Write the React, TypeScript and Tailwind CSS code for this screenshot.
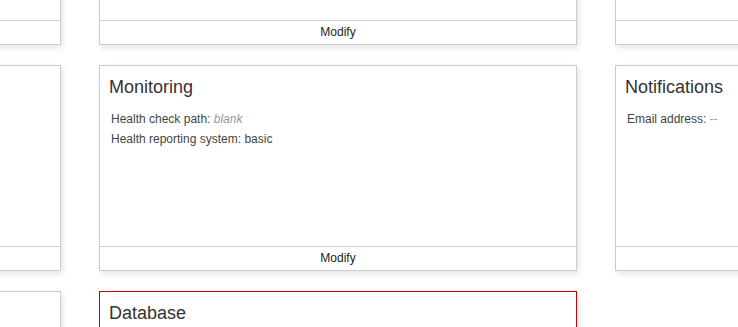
import React from "react";

type Row = { label: string; value: string; muted?: boolean; italic?: boolean };

interface CardProps {
  title?: string;
  rows?: Row[];
  footer?: boolean;
  footerLabel?: boolean;
  danger?: boolean;
}

function Card({ title, rows = [], footer = true, footerLabel = true, danger = false }: CardProps) {
  return (
    <div
      className={`flex h-[206px] flex-col bg-white shadow-[2px_3px_6px_rgba(0,0,0,0.1)] border ${
        danger ? "border-[#c40000]" : "border-[#cccccc]"
      }`}
    >
      <div className="flex-1 px-[9px] pt-[11px]">
        {title && (
          <h3 className="text-[18px] leading-[20px] text-[#333]">{title}</h3>
        )}
        {rows.length > 0 && (
          <div className="mt-[12px] pl-[2px] text-[12px] leading-[20px] text-[#444]">
            {rows.map((r) => (
              <div key={r.label}>
                {r.label}:{" "}
                <span
                  className={`${r.italic ? "italic" : ""} ${
                    r.muted ? "text-[#999]" : ""
                  }`}
                >
                  {r.value}
                </span>
              </div>
            ))}
          </div>
        )}
      </div>
      {footer && (
        <div className="h-[24px] border-t border-[#cccccc] text-center text-[12px] leading-[23px] text-[#222]">
          {footerLabel ? "Modify" : null}
        </div>
      )}
    </div>
  );
}

export default function App() {
  return (
    <div
      className="relative h-[327px] w-[738px] overflow-hidden bg-white"
      style={{ fontFamily: '"Liberation Sans", Arial, Helvetica, sans-serif' }}
    >
      <div className="-ml-[417px] -mt-[161px] grid grid-cols-[478px_478px_478px] gap-x-[38px] gap-y-[20px]">
        {/* top row */}
        <Card footerLabel={false} />
        <Card />
        <Card footerLabel={false} />

        {/* middle row */}
        <Card footerLabel={false} />
        <Card
          title="Monitoring"
          rows={[
            { label: "Health check path", value: "blank", muted: true, italic: true },
            { label: "Health reporting system", value: "basic" },
          ]}
        />
        <Card
          title="Notifications"
          footerLabel={false}
          rows={[{ label: "Email address", value: "--", muted: true }]}
        />

        {/* bottom row */}
        <Card footerLabel={false} />
        <Card title="Database" danger footerLabel={false} />
      </div>
    </div>
  );
}
